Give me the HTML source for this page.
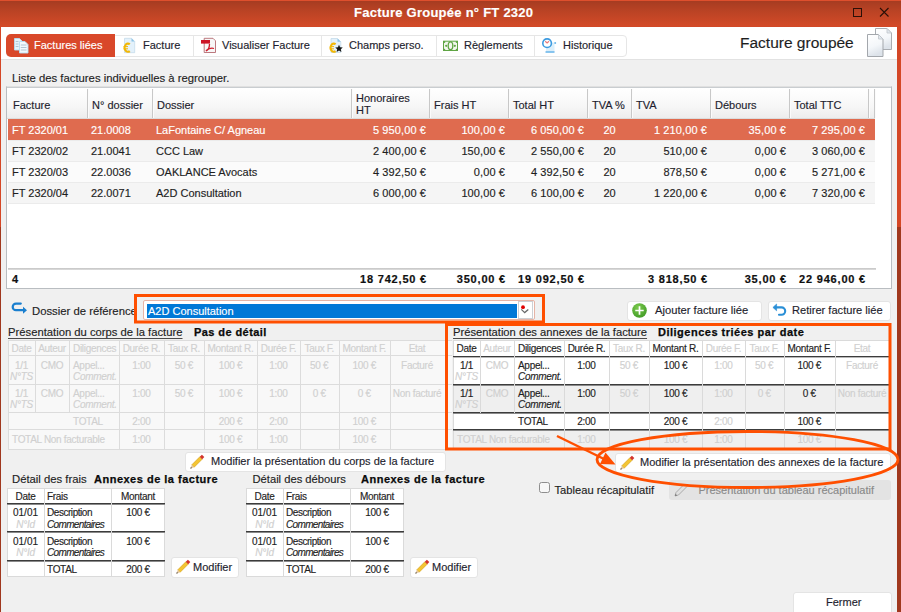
<!DOCTYPE html>
<html><head><meta charset="utf-8"><title>Facture Groupée</title>
<style>
html,body{margin:0;padding:0;}
body{width:901px;height:612px;overflow:hidden;position:relative;background:#f0f0f0;font-family:"Liberation Sans",sans-serif;}
body>div,body>svg{position:absolute;white-space:nowrap;}
body>div{-webkit-text-stroke:0.15px currentColor;}
</style></head><body>
<div style="left:0;top:0;width:901px;height:27px;background:linear-gradient(#a43b21 0px,#b84224 10px,#d34a28 26px,#d04626 27px);"></div>
<div style="left:0px;top:0px;width:901px;height:1px;background:#df4f2d;"></div>
<div style="left:0px;top:27px;width:1px;height:200px;background:#d44726;"></div>
<div style="left:0px;top:227px;width:1px;height:385px;background:#a0381e;"></div>
<div style="left:897px;top:27px;width:4px;height:200px;background:#d44726;"></div>
<div style="left:897px;top:227px;width:4px;height:385px;background:#a0381e;"></div>
<div style="left:354px;top:6px;font-size:13px;line-height:13px;color:#ffffff;font-weight:bold;letter-spacing:0.25px;">Facture Groupée n° FT 2320</div>
<svg style="left:850px;top:4px" width="48" height="18" viewBox="0 0 48 18"><rect x="3.5" y="4.5" width="8" height="8" fill="none" stroke="#2a1008" stroke-width="1"/><path d="M30 4 L38.5 12.5 M38.5 4 L30 12.5" stroke="#2a1008" stroke-width="1.1"/></svg>
<div style="left:1px;top:27px;width:896px;height:32px;background:#ffffff;"></div>
<div style="left:1px;top:59px;width:896px;height:553px;background:#f0f0f0;"></div>
<div style="left:1px;top:59px;width:896px;height:1px;background:#e2e2e2;"></div>
<div style="left:6px;top:35px;width:619px;height:20px;border:1px solid #e6e6e6;border-radius:4px;background:#fff;"></div>
<div style="left:6px;top:34px;width:109px;height:23px;background:#d9482a;border-radius:5px 0 0 5px;"></div>
<div style="left:193px;top:35px;width:1px;height:21px;background:#e6e6e6;"></div>
<div style="left:321px;top:35px;width:1px;height:21px;background:#e6e6e6;"></div>
<div style="left:436px;top:35px;width:1px;height:21px;background:#e6e6e6;"></div>
<div style="left:534px;top:35px;width:1px;height:21px;background:#e6e6e6;"></div>
<svg style="left:8px;top:32px" width="32" height="26" viewBox="8 32 32 26"><path d="M14.5 38.5 H19.5 L22 41 V50 H14.5 Z" fill="#e4f3fc" stroke="#b5dcf2" stroke-width="0.9"/><path d="M15.7 41.5 H18.5 M15.7 44 H18.5 M15.7 46.5 H18.5" stroke="#a3b8c8" stroke-width="0.8"/><path d="M19.5 41.5 H25 L28 44.5 V53 H19.5 Z" fill="#f2f9fd" stroke="#b5dcf2" stroke-width="0.9"/><path d="M20.8 45 H26.5 M20.8 47.5 H26.5 M20.8 50 H26.5" stroke="#a3b8c8" stroke-width="0.8"/></svg>
<div style="left:34px;top:40px;font-size:11px;line-height:11px;color:#ffffff;">Factures liées</div>
<svg style="left:118px;top:34px" width="24" height="22" viewBox="118 34 24 22"><path d="M124.5 38.3 H131.5 L134.7 41.5 V52.7 H124.5 Z" fill="#e3f1fb" stroke="#c5dbea" stroke-width="0.8"/><path d="M131.5 38.3 L134.7 41.5 H131.5 Z" fill="#8cc3e6"/><path d="M129.8 44.3 A3.3 4.1 0 1 0 129.8 51.1" fill="none" stroke="#f2b705" stroke-width="2.1"/><path d="M123.6 46.6 H128 M123.6 48.8 H128" stroke="#f2b705" stroke-width="1"/></svg>
<div style="left:143px;top:40px;font-size:11px;line-height:11px;color:#1e1e2e;">Facture</div>
<svg style="left:196px;top:34px" width="24" height="22" viewBox="196 34 24 22"><path d="M204.2 38.3 H213 L215.5 40.8 V52.5 H204.2 Z" fill="#f7f7f7" stroke="#b46a70" stroke-width="0.9"/><path d="M201 40 H210 V43.6 H201 Z" fill="#cc1426"/><path d="M209.5 44 C209.5 47 208 50 206 51 C207.5 49 211 47.5 214 48.5" fill="none" stroke="#d01c2c" stroke-width="1.3"/></svg>
<div style="left:222px;top:40px;font-size:11px;line-height:11px;color:#1e1e2e;">Visualiser Facture</div>
<svg style="left:325px;top:34px" width="24" height="22" viewBox="325 34 24 22"><path d="M331 38.5 H337.5 L340.8 41.8 V52.5 H331 Z" fill="#e3f1fb" stroke="#c5dbea" stroke-width="0.8"/><path d="M337.5 38.5 L340.8 41.8 H337.5 Z" fill="#8cc3e6"/><path d="M335.6 44.3 A3.2 4.1 0 1 0 335.6 51.1" fill="none" stroke="#f2b705" stroke-width="2.1"/><path d="M330 46.6 H334 M330 48.8 H334" stroke="#f2b705" stroke-width="1"/><path d="M339 44.8 L340.1 47.3 L342.8 47.5 L340.8 49.2 L341.4 51.9 L339 50.5 L336.6 51.9 L337.2 49.2 L335.2 47.5 L337.9 47.3 Z" fill="#151515"/></svg>
<div style="left:349px;top:40px;font-size:11px;line-height:11px;color:#1e1e2e;">Champs perso.</div>
<svg style="left:438px;top:34px" width="24" height="22" viewBox="438 34 24 22"><rect x="443.5" y="41.2" width="14" height="9.3" fill="#f2f6ee" stroke="#5fa544" stroke-width="1"/><ellipse cx="450.5" cy="45.85" rx="2.3" ry="3.9" fill="none" stroke="#5fa544" stroke-width="1.3"/><circle cx="446.2" cy="45.85" r="1.1" fill="#5fa544"/><circle cx="454.8" cy="45.85" r="1.1" fill="#5fa544"/><circle cx="444.3" cy="42" r="1" fill="#5fa544"/><circle cx="456.7" cy="42" r="1" fill="#5fa544"/><circle cx="444.3" cy="49.7" r="1" fill="#5fa544"/><circle cx="456.7" cy="49.7" r="1" fill="#5fa544"/></svg>
<div style="left:464px;top:40px;font-size:11px;line-height:11px;color:#1e1e2e;">Règlements</div>
<svg style="left:537px;top:34px" width="24" height="22" viewBox="537 34 24 22"><path d="M546 42.5 H554.5 V52.5 H546 Z" fill="#dcefFa"/><path d="M545.5 52 H554.5" stroke="#5fb0e8" stroke-width="1.4"/><circle cx="555.2" cy="42.9" r="1" fill="#6ab6ea"/><circle cx="547.1" cy="43.2" r="4.3" fill="#ffffff" stroke="#3c9be0" stroke-width="1.6"/><path d="M545.2 41.3 L547.1 43 L549 41.3" fill="none" stroke="#e87b7b" stroke-width="1.2"/></svg>
<div style="left:563px;top:40px;font-size:11px;line-height:11px;color:#1e1e2e;">Historique</div>
<div style="left:740px;top:35px;font-size:15.5px;line-height:15.5px;color:#1e1e1e;">Facture groupée</div>
<svg style="left:866px;top:27px" width="28" height="31" viewBox="0 0 28 31"><defs><linearGradient id="dg" x1="0" y1="0" x2="0.3" y2="1"><stop offset="0" stop-color="#ffffff"/><stop offset="0.6" stop-color="#f4f7fa"/><stop offset="1" stop-color="#dde3ea"/></linearGradient></defs><path d="M9.5 1.5 H21 L25.5 6 V22.5 H9.5 Z" fill="url(#dg)" stroke="#a9adb2" stroke-width="1"/><path d="M21 1.5 V6 H25.5 Z" fill="#e2e8ee" stroke="#c0c5ca" stroke-width="0.8"/><path d="M1.5 7.5 H12.5 L17 12 V29.5 H1.5 Z" fill="url(#dg)" stroke="#a3a7ac" stroke-width="1"/><path d="M12.5 7.5 V12 H17 Z" fill="#e2e8ee" stroke="#c0c5ca" stroke-width="0.8"/></svg>
<div style="left:12px;top:72.5px;font-size:11.3px;line-height:11.3px;color:#1e1e1e;">Liste des factures individuelles à regrouper.</div>
<div style="left:6px;top:86px;width:886px;height:203px;background:#ffffff;border:1px solid #b9bdc1;border-top-color:#e0e0e0;box-sizing:border-box;"></div>
<div style="left:7px;top:87px;width:884px;height:1px;background:#c9cdd0;"></div>
<div style="left:7px;top:88px;width:868px;height:30px;background:linear-gradient(#ffffff,#f7f7f7 60%,#ededed);"></div>
<div style="left:7px;top:118px;width:868px;height:1px;background:#dcdcdc;"></div>
<div style="left:87px;top:89px;width:1px;height:29px;background:#c8c8c8;"></div>
<div style="left:88px;top:89px;width:1px;height:29px;background:#fbfbfb;"></div>
<div style="left:152px;top:89px;width:1px;height:29px;background:#c8c8c8;"></div>
<div style="left:153px;top:89px;width:1px;height:29px;background:#fbfbfb;"></div>
<div style="left:351px;top:89px;width:1px;height:29px;background:#c8c8c8;"></div>
<div style="left:352px;top:89px;width:1px;height:29px;background:#fbfbfb;"></div>
<div style="left:429px;top:89px;width:1px;height:29px;background:#c8c8c8;"></div>
<div style="left:430px;top:89px;width:1px;height:29px;background:#fbfbfb;"></div>
<div style="left:508px;top:89px;width:1px;height:29px;background:#c8c8c8;"></div>
<div style="left:509px;top:89px;width:1px;height:29px;background:#fbfbfb;"></div>
<div style="left:587px;top:89px;width:1px;height:29px;background:#c8c8c8;"></div>
<div style="left:588px;top:89px;width:1px;height:29px;background:#fbfbfb;"></div>
<div style="left:631px;top:89px;width:1px;height:29px;background:#c8c8c8;"></div>
<div style="left:632px;top:89px;width:1px;height:29px;background:#fbfbfb;"></div>
<div style="left:710px;top:89px;width:1px;height:29px;background:#c8c8c8;"></div>
<div style="left:711px;top:89px;width:1px;height:29px;background:#fbfbfb;"></div>
<div style="left:789px;top:89px;width:1px;height:29px;background:#c8c8c8;"></div>
<div style="left:790px;top:89px;width:1px;height:29px;background:#fbfbfb;"></div>
<div style="left:868px;top:89px;width:1px;height:29px;background:#c8c8c8;"></div>
<div style="left:869px;top:89px;width:1px;height:29px;background:#fbfbfb;"></div>
<div style="left:874px;top:89px;width:1px;height:29px;background:#c8c8c8;"></div>
<div style="left:875px;top:89px;width:1px;height:29px;background:#fbfbfb;"></div>
<div style="left:13px;top:99.5px;font-size:11px;line-height:11px;color:#1e1e2e;">Facture</div>
<div style="left:92px;top:99.5px;font-size:11px;line-height:11px;color:#1e1e2e;">N° dossier</div>
<div style="left:157px;top:99.5px;font-size:11px;line-height:11px;color:#1e1e2e;">Dossier</div>
<div style="left:434px;top:99.5px;font-size:11px;line-height:11px;color:#1e1e2e;">Frais HT</div>
<div style="left:513px;top:99.5px;font-size:11px;line-height:11px;color:#1e1e2e;">Total HT</div>
<div style="left:592px;top:99.5px;font-size:11px;line-height:11px;color:#1e1e2e;">TVA %</div>
<div style="left:636px;top:99.5px;font-size:11px;line-height:11px;color:#1e1e2e;">TVA</div>
<div style="left:715px;top:99.5px;font-size:11px;line-height:11px;color:#1e1e2e;">Débours</div>
<div style="left:794px;top:99.5px;font-size:11px;line-height:11px;color:#1e1e2e;">Total TTC</div>
<div style="left:356px;top:93px;font-size:11px;line-height:11px;color:#1e1e2e;">Honoraires</div>
<div style="left:356px;top:105px;font-size:11px;line-height:11px;color:#1e1e2e;">HT</div>
<div style="left:8px;top:119px;width:867px;height:21px;background:#df6b4f;"></div>
<div style="left:12px;top:124.5px;font-size:11px;line-height:11px;color:#ffffff;">FT 2320/01</div>
<div style="left:91px;top:124.5px;font-size:11px;line-height:11px;color:#ffffff;">21.0008</div>
<div style="left:156px;top:124.5px;font-size:11px;line-height:11px;color:#ffffff;">LaFontaine C/ Agneau</div>
<div style="left:351px;top:124.5px;font-size:11px;line-height:11px;color:#ffffff;width:75px;text-align:right;letter-spacing:0.1px;">5 950,00 €</div>
<div style="left:429px;top:124.5px;font-size:11px;line-height:11px;color:#ffffff;width:76px;text-align:right;letter-spacing:0.1px;">100,00 €</div>
<div style="left:508px;top:124.5px;font-size:11px;line-height:11px;color:#ffffff;width:76px;text-align:right;letter-spacing:0.1px;">6 050,00 €</div>
<div style="left:587px;top:124.5px;font-size:11px;line-height:11px;color:#ffffff;width:45px;text-align:center;">20</div>
<div style="left:631px;top:124.5px;font-size:11px;line-height:11px;color:#ffffff;width:76px;text-align:right;letter-spacing:0.1px;">1 210,00 €</div>
<div style="left:710px;top:124.5px;font-size:11px;line-height:11px;color:#ffffff;width:76px;text-align:right;letter-spacing:0.1px;">35,00 €</div>
<div style="left:789px;top:124.5px;font-size:11px;line-height:11px;color:#ffffff;width:76px;text-align:right;letter-spacing:0.1px;">7 295,00 €</div>
<div style="left:8px;top:140px;width:867px;height:21px;background:#f5f5f5;"></div>
<div style="left:8px;top:140px;width:867px;height:1px;background:#ebebeb;"></div>
<div style="left:12px;top:145.5px;font-size:11px;line-height:11px;color:#1e1e1e;">FT 2320/02</div>
<div style="left:91px;top:145.5px;font-size:11px;line-height:11px;color:#1e1e1e;">21.0041</div>
<div style="left:156px;top:145.5px;font-size:11px;line-height:11px;color:#1e1e1e;">CCC Law</div>
<div style="left:351px;top:145.5px;font-size:11px;line-height:11px;color:#1e1e1e;width:75px;text-align:right;letter-spacing:0.1px;">2 400,00 €</div>
<div style="left:429px;top:145.5px;font-size:11px;line-height:11px;color:#1e1e1e;width:76px;text-align:right;letter-spacing:0.1px;">150,00 €</div>
<div style="left:508px;top:145.5px;font-size:11px;line-height:11px;color:#1e1e1e;width:76px;text-align:right;letter-spacing:0.1px;">2 550,00 €</div>
<div style="left:587px;top:145.5px;font-size:11px;line-height:11px;color:#1e1e1e;width:45px;text-align:center;">20</div>
<div style="left:631px;top:145.5px;font-size:11px;line-height:11px;color:#1e1e1e;width:76px;text-align:right;letter-spacing:0.1px;">510,00 €</div>
<div style="left:710px;top:145.5px;font-size:11px;line-height:11px;color:#1e1e1e;width:76px;text-align:right;letter-spacing:0.1px;">0,00 €</div>
<div style="left:789px;top:145.5px;font-size:11px;line-height:11px;color:#1e1e1e;width:76px;text-align:right;letter-spacing:0.1px;">3 060,00 €</div>
<div style="left:8px;top:161px;width:867px;height:21px;background:#fbfbfb;"></div>
<div style="left:8px;top:161px;width:867px;height:1px;background:#ebebeb;"></div>
<div style="left:12px;top:166.5px;font-size:11px;line-height:11px;color:#1e1e1e;">FT 2320/03</div>
<div style="left:91px;top:166.5px;font-size:11px;line-height:11px;color:#1e1e1e;">22.0036</div>
<div style="left:156px;top:166.5px;font-size:11px;line-height:11px;color:#1e1e1e;">OAKLANCE Avocats</div>
<div style="left:351px;top:166.5px;font-size:11px;line-height:11px;color:#1e1e1e;width:75px;text-align:right;letter-spacing:0.1px;">4 392,50 €</div>
<div style="left:429px;top:166.5px;font-size:11px;line-height:11px;color:#1e1e1e;width:76px;text-align:right;letter-spacing:0.1px;">0,00 €</div>
<div style="left:508px;top:166.5px;font-size:11px;line-height:11px;color:#1e1e1e;width:76px;text-align:right;letter-spacing:0.1px;">4 392,50 €</div>
<div style="left:587px;top:166.5px;font-size:11px;line-height:11px;color:#1e1e1e;width:45px;text-align:center;">20</div>
<div style="left:631px;top:166.5px;font-size:11px;line-height:11px;color:#1e1e1e;width:76px;text-align:right;letter-spacing:0.1px;">878,50 €</div>
<div style="left:710px;top:166.5px;font-size:11px;line-height:11px;color:#1e1e1e;width:76px;text-align:right;letter-spacing:0.1px;">0,00 €</div>
<div style="left:789px;top:166.5px;font-size:11px;line-height:11px;color:#1e1e1e;width:76px;text-align:right;letter-spacing:0.1px;">5 271,00 €</div>
<div style="left:8px;top:182px;width:867px;height:21px;background:#f5f5f5;"></div>
<div style="left:8px;top:182px;width:867px;height:1px;background:#ebebeb;"></div>
<div style="left:12px;top:187.5px;font-size:11px;line-height:11px;color:#1e1e1e;">FT 2320/04</div>
<div style="left:91px;top:187.5px;font-size:11px;line-height:11px;color:#1e1e1e;">22.0071</div>
<div style="left:156px;top:187.5px;font-size:11px;line-height:11px;color:#1e1e1e;">A2D Consultation</div>
<div style="left:351px;top:187.5px;font-size:11px;line-height:11px;color:#1e1e1e;width:75px;text-align:right;letter-spacing:0.1px;">6 000,00 €</div>
<div style="left:429px;top:187.5px;font-size:11px;line-height:11px;color:#1e1e1e;width:76px;text-align:right;letter-spacing:0.1px;">100,00 €</div>
<div style="left:508px;top:187.5px;font-size:11px;line-height:11px;color:#1e1e1e;width:76px;text-align:right;letter-spacing:0.1px;">6 100,00 €</div>
<div style="left:587px;top:187.5px;font-size:11px;line-height:11px;color:#1e1e1e;width:45px;text-align:center;">20</div>
<div style="left:631px;top:187.5px;font-size:11px;line-height:11px;color:#1e1e1e;width:76px;text-align:right;letter-spacing:0.1px;">1 220,00 €</div>
<div style="left:710px;top:187.5px;font-size:11px;line-height:11px;color:#1e1e1e;width:76px;text-align:right;letter-spacing:0.1px;">0,00 €</div>
<div style="left:789px;top:187.5px;font-size:11px;line-height:11px;color:#1e1e1e;width:76px;text-align:right;letter-spacing:0.1px;">7 320,00 €</div>
<div style="left:8px;top:203px;width:867px;height:1px;background:#ebebeb;"></div>
<div style="left:8px;top:268px;width:868px;height:2px;background:linear-gradient(#c4c4c4,#dedede);"></div>
<div style="left:12px;top:274px;font-size:11px;line-height:11px;color:#101010;font-weight:bold;-webkit-text-stroke:0.2px #101010;">4</div>
<div style="left:351px;top:274px;font-size:11px;line-height:11px;color:#101010;font-weight:bold;width:76px;text-align:right;letter-spacing:0.8px;-webkit-text-stroke:0.2px #101010;">18 742,50 €</div>
<div style="left:429px;top:274px;font-size:11px;line-height:11px;color:#101010;font-weight:bold;width:77px;text-align:right;letter-spacing:0.8px;-webkit-text-stroke:0.2px #101010;">350,00 €</div>
<div style="left:508px;top:274px;font-size:11px;line-height:11px;color:#101010;font-weight:bold;width:77px;text-align:right;letter-spacing:0.8px;-webkit-text-stroke:0.2px #101010;">19 092,50 €</div>
<div style="left:631px;top:274px;font-size:11px;line-height:11px;color:#101010;font-weight:bold;width:77px;text-align:right;letter-spacing:0.8px;-webkit-text-stroke:0.2px #101010;">3 818,50 €</div>
<div style="left:710px;top:274px;font-size:11px;line-height:11px;color:#101010;font-weight:bold;width:77px;text-align:right;letter-spacing:0.8px;-webkit-text-stroke:0.2px #101010;">35,00 €</div>
<div style="left:789px;top:274px;font-size:11px;line-height:11px;color:#101010;font-weight:bold;width:77px;text-align:right;letter-spacing:0.8px;-webkit-text-stroke:0.2px #101010;">22 946,00 €</div>
<svg style="left:8px;top:298px" width="24" height="22" viewBox="0 0 24 22"><path d="M12.8 5.6 H8 A3.3 3.3 0 0 0 8 12.2 H16" fill="none" stroke="#1a7fcf" stroke-width="2.2" stroke-linecap="round"/><path d="M15 8.8 L19 12.3 L15 15.8 Z" fill="#1a7fcf"/></svg>
<div style="left:32px;top:306px;font-size:11.3px;line-height:11.3px;color:#1e1e1e;">Dossier de référence</div>
<div style="left:143px;top:300px;width:392px;height:20px;background:#ffffff;border:1.5px solid #e6b4a6;border-radius:2px;box-sizing:border-box;"></div>
<div style="left:147px;top:304px;width:370px;height:14px;background:#0078d7;"></div>
<div style="left:148px;top:306px;font-size:11px;line-height:11px;color:#ffffff;">A2D Consultation</div>
<div style="left:518px;top:301px;width:15px;height:18px;background:#ffffff;border:1px solid #cdd0d4;box-sizing:border-box;"></div>
<svg style="left:512px;top:298px" width="28" height="24" viewBox="512 298 28 24"><circle cx="523" cy="307.2" r="1.9" fill="#e00000"/><path d="M521.3 309.4 L524.7 312.6 L528.3 309.4" fill="none" stroke="#6a6a6a" stroke-width="1.3"/></svg>
<div style="left:627px;top:301px;width:135px;height:20px;background:#fff;border:1px solid #e4e4e4;border-radius:3px;box-sizing:border-box;"></div>
<svg style="left:631px;top:302px" width="17" height="17" viewBox="0 0 17 17"><defs><radialGradient id="gg" cx="0.4" cy="0.3" r="0.8"><stop offset="0" stop-color="#7ccb4e"/><stop offset="1" stop-color="#3c9722"/></radialGradient></defs><circle cx="8.5" cy="8.5" r="7.3" fill="url(#gg)"/><path d="M8.5 4.3 V12.7 M4.3 8.5 H12.7" stroke="#ffffff" stroke-width="1.7"/></svg>
<div style="left:655px;top:305px;font-size:11.2px;line-height:11.2px;color:#1e1e2e;">Ajouter facture liée</div>
<div style="left:768px;top:301px;width:123px;height:20px;background:#fff;border:1px solid #e4e4e4;border-radius:3px;box-sizing:border-box;"></div>
<svg style="left:768px;top:300px" width="24" height="22" viewBox="768 300 24 22"><path d="M775.5 307.4 H781.5 A3.7 3.7 0 0 1 781.5 314.8 H779" fill="none" stroke="#2a8fd6" stroke-width="2.1" stroke-linecap="round"/><path d="M772.9 307.4 L776.6 304 L776.6 310.8 Z" fill="#2a8fd6" stroke="#2a8fd6" stroke-width="0.6" stroke-linejoin="round"/></svg>
<div style="left:792px;top:305px;font-size:11.1px;line-height:11.1px;color:#1e1e2e;">Retirer facture liée</div>
<div style="left:8px;top:340px;width:444px;height:109px;background:#f8f8f8;"></div>
<div style="left:8px;top:340px;width:444px;height:1px;background:#dcdcdc;"></div>
<div style="left:8px;top:340px;width:1px;height:109px;background:#dcdcdc;"></div>
<div style="left:8px;top:355px;width:444px;height:1px;background:#dcdcdc;"></div>
<div style="left:8px;top:384px;width:444px;height:1px;background:#dcdcdc;"></div>
<div style="left:8px;top:412px;width:444px;height:1px;background:#dcdcdc;"></div>
<div style="left:8px;top:429px;width:444px;height:1px;background:#dcdcdc;"></div>
<div style="left:8px;top:449px;width:444px;height:1px;background:#dcdcdc;"></div>
<div style="left:35px;top:340px;width:1px;height:73px;background:#dcdcdc;"></div>
<div style="left:69px;top:340px;width:1px;height:73px;background:#dcdcdc;"></div>
<div style="left:119px;top:340px;width:1px;height:73px;background:#dcdcdc;"></div>
<div style="left:119px;top:413px;width:1px;height:17px;background:#dcdcdc;"></div>
<div style="left:119px;top:430px;width:1px;height:19px;background:#dcdcdc;"></div>
<div style="left:164px;top:340px;width:1px;height:73px;background:#dcdcdc;"></div>
<div style="left:164px;top:413px;width:1px;height:17px;background:#dcdcdc;"></div>
<div style="left:164px;top:430px;width:1px;height:19px;background:#dcdcdc;"></div>
<div style="left:204px;top:340px;width:1px;height:73px;background:#dcdcdc;"></div>
<div style="left:204px;top:413px;width:1px;height:17px;background:#dcdcdc;"></div>
<div style="left:204px;top:430px;width:1px;height:19px;background:#dcdcdc;"></div>
<div style="left:257px;top:340px;width:1px;height:73px;background:#dcdcdc;"></div>
<div style="left:257px;top:413px;width:1px;height:17px;background:#dcdcdc;"></div>
<div style="left:257px;top:430px;width:1px;height:19px;background:#dcdcdc;"></div>
<div style="left:300px;top:340px;width:1px;height:73px;background:#dcdcdc;"></div>
<div style="left:300px;top:413px;width:1px;height:17px;background:#dcdcdc;"></div>
<div style="left:300px;top:430px;width:1px;height:19px;background:#dcdcdc;"></div>
<div style="left:338.5px;top:340px;width:1px;height:73px;background:#dcdcdc;"></div>
<div style="left:338.5px;top:413px;width:1px;height:17px;background:#dcdcdc;"></div>
<div style="left:338.5px;top:430px;width:1px;height:19px;background:#dcdcdc;"></div>
<div style="left:390px;top:340px;width:1px;height:73px;background:#dcdcdc;"></div>
<div style="left:390px;top:413px;width:1px;height:17px;background:#dcdcdc;"></div>
<div style="left:390px;top:430px;width:1px;height:19px;background:#dcdcdc;"></div>
<div style="left:8px;top:344px;font-size:10px;line-height:10px;color:#d0d0d0;width:27px;text-align:center;letter-spacing:-0.3px;">Date</div>
<div style="left:35px;top:344px;font-size:10px;line-height:10px;color:#d0d0d0;width:34px;text-align:center;letter-spacing:-0.3px;">Auteur</div>
<div style="left:73px;top:344px;font-size:10px;line-height:10px;color:#d0d0d0;letter-spacing:-0.3px;">Diligences</div>
<div style="left:119px;top:344px;font-size:10px;line-height:10px;color:#d0d0d0;width:45px;text-align:center;letter-spacing:-0.3px;">Durée R.</div>
<div style="left:164px;top:344px;font-size:10px;line-height:10px;color:#d0d0d0;width:40px;text-align:center;letter-spacing:-0.3px;">Taux R.</div>
<div style="left:204px;top:344px;font-size:10px;line-height:10px;color:#d0d0d0;width:53px;text-align:center;letter-spacing:-0.3px;">Montant R.</div>
<div style="left:257px;top:344px;font-size:10px;line-height:10px;color:#d0d0d0;width:43px;text-align:center;letter-spacing:-0.3px;">Durée F.</div>
<div style="left:300px;top:344px;font-size:10px;line-height:10px;color:#d0d0d0;width:38.5px;text-align:center;letter-spacing:-0.3px;">Taux F.</div>
<div style="left:338.5px;top:344px;font-size:10px;line-height:10px;color:#d0d0d0;width:51.5px;text-align:center;letter-spacing:-0.3px;">Montant F.</div>
<div style="left:390px;top:344px;font-size:10px;line-height:10px;color:#d0d0d0;width:54px;text-align:center;letter-spacing:-0.3px;">Etat</div>
<div style="left:8px;top:361px;font-size:10px;line-height:10px;color:#d0d0d0;width:27px;text-align:center;letter-spacing:-0.3px;">1/1</div>
<div style="left:8px;top:372px;font-size:10px;line-height:10px;color:#d0d0d0;font-style:italic;width:27px;text-align:center;letter-spacing:-0.3px;">N°TS</div>
<div style="left:35px;top:361px;font-size:10px;line-height:10px;color:#d0d0d0;width:34px;text-align:center;letter-spacing:-0.3px;">CMO</div>
<div style="left:73px;top:361px;font-size:10px;line-height:10px;color:#d0d0d0;letter-spacing:-0.3px;">Appel...</div>
<div style="left:73px;top:372px;font-size:10px;line-height:10px;color:#d0d0d0;font-style:italic;letter-spacing:-0.3px;">Comment.</div>
<div style="left:119px;top:361px;font-size:10px;line-height:10px;color:#d0d0d0;width:45px;text-align:center;letter-spacing:-0.3px;">1:00</div>
<div style="left:164px;top:361px;font-size:10px;line-height:10px;color:#d0d0d0;width:40px;text-align:center;letter-spacing:-0.3px;">50 €</div>
<div style="left:204px;top:361px;font-size:10px;line-height:10px;color:#d0d0d0;width:53px;text-align:center;letter-spacing:-0.3px;">100 €</div>
<div style="left:257px;top:361px;font-size:10px;line-height:10px;color:#d0d0d0;width:43px;text-align:center;letter-spacing:-0.3px;">1:00</div>
<div style="left:300px;top:361px;font-size:10px;line-height:10px;color:#d0d0d0;width:38.5px;text-align:center;letter-spacing:-0.3px;">50 €</div>
<div style="left:338.5px;top:361px;font-size:10px;line-height:10px;color:#d0d0d0;width:51.5px;text-align:center;letter-spacing:-0.3px;">100 €</div>
<div style="left:390px;top:361px;font-size:10px;line-height:10px;color:#d0d0d0;width:54px;text-align:center;letter-spacing:-0.3px;">Facturé</div>
<div style="left:8px;top:389px;font-size:10px;line-height:10px;color:#d0d0d0;width:27px;text-align:center;letter-spacing:-0.3px;">1/1</div>
<div style="left:8px;top:400px;font-size:10px;line-height:10px;color:#d0d0d0;font-style:italic;width:27px;text-align:center;letter-spacing:-0.3px;">N°TS</div>
<div style="left:35px;top:389px;font-size:10px;line-height:10px;color:#d0d0d0;width:34px;text-align:center;letter-spacing:-0.3px;">CMO</div>
<div style="left:73px;top:389px;font-size:10px;line-height:10px;color:#d0d0d0;letter-spacing:-0.3px;">Appel...</div>
<div style="left:73px;top:400px;font-size:10px;line-height:10px;color:#d0d0d0;font-style:italic;letter-spacing:-0.3px;">Comment.</div>
<div style="left:119px;top:389px;font-size:10px;line-height:10px;color:#d0d0d0;width:45px;text-align:center;letter-spacing:-0.3px;">1:00</div>
<div style="left:164px;top:389px;font-size:10px;line-height:10px;color:#d0d0d0;width:40px;text-align:center;letter-spacing:-0.3px;">50 €</div>
<div style="left:204px;top:389px;font-size:10px;line-height:10px;color:#d0d0d0;width:53px;text-align:center;letter-spacing:-0.3px;">100 €</div>
<div style="left:257px;top:389px;font-size:10px;line-height:10px;color:#d0d0d0;width:43px;text-align:center;letter-spacing:-0.3px;">1:00</div>
<div style="left:300px;top:389px;font-size:10px;line-height:10px;color:#d0d0d0;width:38.5px;text-align:center;letter-spacing:-0.3px;">0 €</div>
<div style="left:338.5px;top:389px;font-size:10px;line-height:10px;color:#d0d0d0;width:51.5px;text-align:center;letter-spacing:-0.3px;">0 €</div>
<div style="left:390px;top:389px;font-size:10px;line-height:10px;color:#d0d0d0;width:54px;text-align:center;letter-spacing:-0.3px;">Non facturé</div>
<div style="left:73px;top:417px;font-size:10px;line-height:10px;color:#d0d0d0;letter-spacing:-0.3px;">TOTAL</div>
<div style="left:119px;top:417px;font-size:10px;line-height:10px;color:#d0d0d0;width:45px;text-align:center;letter-spacing:-0.3px;">2:00</div>
<div style="left:204px;top:417px;font-size:10px;line-height:10px;color:#d0d0d0;width:53px;text-align:center;letter-spacing:-0.3px;">200 €</div>
<div style="left:257px;top:417px;font-size:10px;line-height:10px;color:#d0d0d0;width:43px;text-align:center;letter-spacing:-0.3px;">2:00</div>
<div style="left:338.5px;top:417px;font-size:10px;line-height:10px;color:#d0d0d0;width:51.5px;text-align:center;letter-spacing:-0.3px;">100 €</div>
<div style="left:12px;top:435px;font-size:10px;line-height:10px;color:#d0d0d0;letter-spacing:-0.3px;">TOTAL Non facturable</div>
<div style="left:119px;top:435px;font-size:10px;line-height:10px;color:#d0d0d0;width:45px;text-align:center;letter-spacing:-0.3px;">1:00</div>
<div style="left:204px;top:435px;font-size:10px;line-height:10px;color:#d0d0d0;width:53px;text-align:center;letter-spacing:-0.3px;">100 €</div>
<div style="left:257px;top:435px;font-size:10px;line-height:10px;color:#d0d0d0;width:43px;text-align:center;letter-spacing:-0.3px;">1:00</div>
<div style="left:338.5px;top:435px;font-size:10px;line-height:10px;color:#d0d0d0;width:51.5px;text-align:center;letter-spacing:-0.3px;">100 €</div>
<div style="left:453px;top:340px;width:436px;height:108px;background:#ffffff;"></div>
<div style="left:453px;top:386px;width:436px;height:27px;background:#efefef;"></div>
<div style="left:453px;top:431px;width:436px;height:17px;background:#efefef;"></div>
<div style="left:453px;top:340px;width:436px;height:1px;background:#dadada;"></div>
<div style="left:453px;top:340px;width:1px;height:108px;background:#dadada;"></div>
<div style="left:453px;top:356px;width:436px;height:1px;background:#3c3c3c;"></div>
<div style="left:453px;top:357px;width:436px;height:1px;background:#b8b8b8;"></div>
<div style="left:453px;top:384px;width:436px;height:1px;background:#3c3c3c;"></div>
<div style="left:453px;top:385px;width:436px;height:1px;background:#8a8a8a;"></div>
<div style="left:453px;top:412px;width:436px;height:1px;background:#3c3c3c;"></div>
<div style="left:453px;top:413px;width:436px;height:1px;background:#8a8a8a;"></div>
<div style="left:453px;top:429px;width:436px;height:1px;background:#3c3c3c;"></div>
<div style="left:453px;top:430px;width:436px;height:1px;background:#8a8a8a;"></div>
<div style="left:480px;top:340px;width:1px;height:73px;background:#dadada;"></div>
<div style="left:514px;top:340px;width:1px;height:73px;background:#dadada;"></div>
<div style="left:564px;top:340px;width:1px;height:73px;background:#dadada;"></div>
<div style="left:564px;top:413px;width:1px;height:17px;background:#dadada;"></div>
<div style="left:564px;top:430px;width:1px;height:18px;background:#dadada;"></div>
<div style="left:609px;top:340px;width:1px;height:73px;background:#dadada;"></div>
<div style="left:609px;top:413px;width:1px;height:17px;background:#dadada;"></div>
<div style="left:609px;top:430px;width:1px;height:18px;background:#dadada;"></div>
<div style="left:649px;top:340px;width:1px;height:73px;background:#dadada;"></div>
<div style="left:649px;top:413px;width:1px;height:17px;background:#dadada;"></div>
<div style="left:649px;top:430px;width:1px;height:18px;background:#dadada;"></div>
<div style="left:702px;top:340px;width:1px;height:73px;background:#dadada;"></div>
<div style="left:702px;top:413px;width:1px;height:17px;background:#dadada;"></div>
<div style="left:702px;top:430px;width:1px;height:18px;background:#dadada;"></div>
<div style="left:745px;top:340px;width:1px;height:73px;background:#dadada;"></div>
<div style="left:745px;top:413px;width:1px;height:17px;background:#dadada;"></div>
<div style="left:745px;top:430px;width:1px;height:18px;background:#dadada;"></div>
<div style="left:783.5px;top:340px;width:1px;height:73px;background:#dadada;"></div>
<div style="left:783.5px;top:413px;width:1px;height:17px;background:#dadada;"></div>
<div style="left:783.5px;top:430px;width:1px;height:18px;background:#dadada;"></div>
<div style="left:835px;top:340px;width:1px;height:73px;background:#dadada;"></div>
<div style="left:835px;top:413px;width:1px;height:17px;background:#dadada;"></div>
<div style="left:835px;top:430px;width:1px;height:18px;background:#dadada;"></div>
<div style="left:453px;top:344px;font-size:10px;line-height:10px;color:#1e1e1e;width:27px;text-align:center;letter-spacing:-0.3px;">Date</div>
<div style="left:480px;top:344px;font-size:10px;line-height:10px;color:#d0d0d0;width:34px;text-align:center;letter-spacing:-0.3px;">Auteur</div>
<div style="left:518px;top:344px;font-size:10px;line-height:10px;color:#1e1e1e;letter-spacing:-0.3px;">Diligences</div>
<div style="left:564px;top:344px;font-size:10px;line-height:10px;color:#1e1e1e;width:45px;text-align:center;letter-spacing:-0.3px;">Durée R.</div>
<div style="left:609px;top:344px;font-size:10px;line-height:10px;color:#d0d0d0;width:40px;text-align:center;letter-spacing:-0.3px;">Taux R.</div>
<div style="left:649px;top:344px;font-size:10px;line-height:10px;color:#1e1e1e;width:53px;text-align:center;letter-spacing:-0.3px;">Montant R.</div>
<div style="left:702px;top:344px;font-size:10px;line-height:10px;color:#d0d0d0;width:43px;text-align:center;letter-spacing:-0.3px;">Durée F.</div>
<div style="left:745px;top:344px;font-size:10px;line-height:10px;color:#d0d0d0;width:38.5px;text-align:center;letter-spacing:-0.3px;">Taux F.</div>
<div style="left:783.5px;top:344px;font-size:10px;line-height:10px;color:#1e1e1e;width:51.5px;text-align:center;letter-spacing:-0.3px;">Montant F.</div>
<div style="left:835px;top:344px;font-size:10px;line-height:10px;color:#d0d0d0;width:54px;text-align:center;letter-spacing:-0.3px;">Etat</div>
<div style="left:453px;top:361px;font-size:10px;line-height:10px;color:#1e1e1e;width:27px;text-align:center;letter-spacing:-0.3px;">1/1</div>
<div style="left:453px;top:372px;font-size:10px;line-height:10px;color:#d0d0d0;font-style:italic;width:27px;text-align:center;letter-spacing:-0.3px;">N°TS</div>
<div style="left:480px;top:361px;font-size:10px;line-height:10px;color:#d0d0d0;width:34px;text-align:center;letter-spacing:-0.3px;">CMO</div>
<div style="left:518px;top:361px;font-size:10px;line-height:10px;color:#1e1e1e;letter-spacing:-0.3px;">Appel...</div>
<div style="left:518px;top:372px;font-size:10px;line-height:10px;color:#1e1e1e;font-style:italic;letter-spacing:-0.3px;">Comment.</div>
<div style="left:564px;top:361px;font-size:10px;line-height:10px;color:#1e1e1e;width:45px;text-align:center;letter-spacing:-0.3px;">1:00</div>
<div style="left:609px;top:361px;font-size:10px;line-height:10px;color:#d0d0d0;width:40px;text-align:center;letter-spacing:-0.3px;">50 €</div>
<div style="left:649px;top:361px;font-size:10px;line-height:10px;color:#1e1e1e;width:53px;text-align:center;letter-spacing:-0.3px;">100 €</div>
<div style="left:702px;top:361px;font-size:10px;line-height:10px;color:#d0d0d0;width:43px;text-align:center;letter-spacing:-0.3px;">1:00</div>
<div style="left:745px;top:361px;font-size:10px;line-height:10px;color:#d0d0d0;width:38.5px;text-align:center;letter-spacing:-0.3px;">50 €</div>
<div style="left:783.5px;top:361px;font-size:10px;line-height:10px;color:#1e1e1e;width:51.5px;text-align:center;letter-spacing:-0.3px;">100 €</div>
<div style="left:835px;top:361px;font-size:10px;line-height:10px;color:#d0d0d0;width:54px;text-align:center;letter-spacing:-0.3px;">Facturé</div>
<div style="left:453px;top:389px;font-size:10px;line-height:10px;color:#1e1e1e;width:27px;text-align:center;letter-spacing:-0.3px;">1/1</div>
<div style="left:453px;top:400px;font-size:10px;line-height:10px;color:#d0d0d0;font-style:italic;width:27px;text-align:center;letter-spacing:-0.3px;">N°TS</div>
<div style="left:480px;top:389px;font-size:10px;line-height:10px;color:#d0d0d0;width:34px;text-align:center;letter-spacing:-0.3px;">CMO</div>
<div style="left:518px;top:389px;font-size:10px;line-height:10px;color:#1e1e1e;letter-spacing:-0.3px;">Appel...</div>
<div style="left:518px;top:400px;font-size:10px;line-height:10px;color:#1e1e1e;font-style:italic;letter-spacing:-0.3px;">Comment.</div>
<div style="left:564px;top:389px;font-size:10px;line-height:10px;color:#1e1e1e;width:45px;text-align:center;letter-spacing:-0.3px;">1:00</div>
<div style="left:609px;top:389px;font-size:10px;line-height:10px;color:#d0d0d0;width:40px;text-align:center;letter-spacing:-0.3px;">50 €</div>
<div style="left:649px;top:389px;font-size:10px;line-height:10px;color:#1e1e1e;width:53px;text-align:center;letter-spacing:-0.3px;">100 €</div>
<div style="left:702px;top:389px;font-size:10px;line-height:10px;color:#d0d0d0;width:43px;text-align:center;letter-spacing:-0.3px;">1:00</div>
<div style="left:745px;top:389px;font-size:10px;line-height:10px;color:#d0d0d0;width:38.5px;text-align:center;letter-spacing:-0.3px;">0 €</div>
<div style="left:783.5px;top:389px;font-size:10px;line-height:10px;color:#1e1e1e;width:51.5px;text-align:center;letter-spacing:-0.3px;">0 €</div>
<div style="left:835px;top:389px;font-size:10px;line-height:10px;color:#d0d0d0;width:54px;text-align:center;letter-spacing:-0.3px;">Non facturé</div>
<div style="left:518px;top:417px;font-size:10px;line-height:10px;color:#1e1e1e;letter-spacing:-0.3px;">TOTAL</div>
<div style="left:564px;top:417px;font-size:10px;line-height:10px;color:#1e1e1e;width:45px;text-align:center;letter-spacing:-0.3px;">2:00</div>
<div style="left:649px;top:417px;font-size:10px;line-height:10px;color:#1e1e1e;width:53px;text-align:center;letter-spacing:-0.3px;">200 €</div>
<div style="left:702px;top:417px;font-size:10px;line-height:10px;color:#d0d0d0;width:43px;text-align:center;letter-spacing:-0.3px;">2:00</div>
<div style="left:783.5px;top:417px;font-size:10px;line-height:10px;color:#1e1e1e;width:51.5px;text-align:center;letter-spacing:-0.3px;">100 €</div>
<div style="left:457px;top:435px;font-size:10px;line-height:10px;color:#d0d0d0;letter-spacing:-0.3px;">TOTAL Non facturable</div>
<div style="left:564px;top:435px;font-size:10px;line-height:10px;color:#d0d0d0;width:45px;text-align:center;letter-spacing:-0.3px;">1:00</div>
<div style="left:649px;top:435px;font-size:10px;line-height:10px;color:#d0d0d0;width:53px;text-align:center;letter-spacing:-0.3px;">100 €</div>
<div style="left:702px;top:435px;font-size:10px;line-height:10px;color:#d0d0d0;width:43px;text-align:center;letter-spacing:-0.3px;">1:00</div>
<div style="left:783.5px;top:435px;font-size:10px;line-height:10px;color:#d0d0d0;width:51.5px;text-align:center;letter-spacing:-0.3px;">100 €</div>
<div style="left:8px;top:326.5px;font-size:11.25px;line-height:11.25px;color:#1e1e1e;text-decoration:underline;text-decoration-color:#4a4a4a;text-underline-offset:1.5px;text-decoration-skip-ink:none;">Présentation du corps de la facture</div>
<div style="left:194px;top:327px;font-size:11px;line-height:11px;color:#0a0a0a;font-weight:bold;letter-spacing:0.42px;-webkit-text-stroke:0.25px #0a0a0a;">Pas de détail</div>
<div style="left:453px;top:326.5px;font-size:11.2px;line-height:11.2px;color:#1e1e1e;text-decoration:underline;text-decoration-color:#4a4a4a;text-underline-offset:1.5px;text-decoration-skip-ink:none;">Présentation des annexes de la facture</div>
<div style="left:658px;top:327px;font-size:11px;line-height:11px;color:#0a0a0a;font-weight:bold;letter-spacing:0.5px;-webkit-text-stroke:0.25px #0a0a0a;">Diligences triées par date</div>
<div style="left:185px;top:452px;width:261px;height:20px;background:#fff;border:1px solid #e4e4e4;border-radius:3px;box-sizing:border-box;"></div>
<svg style="left:189px;top:454px" width="16" height="16" viewBox="0 0 16 16"><path d="M2.8 10.8 L10.8 2.8 L13.2 5.2 L5.2 13.2 Z" fill="#f4c533" stroke="#d29a18" stroke-width="0.6"/><path d="M10.8 2.8 L12.9 0.7 L15.3 3.1 L13.2 5.2 Z" fill="#d3342c"/><path d="M2.8 10.8 L5.2 13.2 L1.3 14.7 Z" fill="#e6c79c"/><path d="M1.3 14.7 L1.9 12.9 L3.1 14.1 Z" fill="#4a4a4a"/></svg>
<div style="left:211px;top:456px;font-size:11px;line-height:11px;color:#1e1e2e;">Modifier la présentation du corps de la facture</div>
<div style="left:7px;top:488px;width:158px;height:89px;background:#ffffff;border:1px solid #dadada;box-sizing:border-box;"></div>
<div style="left:7px;top:503px;width:158px;height:1px;background:#3c3c3c;"></div>
<div style="left:7px;top:504px;width:158px;height:1px;background:#8a8a8a;"></div>
<div style="left:7px;top:531px;width:158px;height:1px;background:#3c3c3c;"></div>
<div style="left:7px;top:532px;width:158px;height:1px;background:#8a8a8a;"></div>
<div style="left:7px;top:560px;width:158px;height:1px;background:#3c3c3c;"></div>
<div style="left:7px;top:561px;width:158px;height:1px;background:#8a8a8a;"></div>
<div style="left:44px;top:488px;width:1px;height:89px;background:#dadada;"></div>
<div style="left:111px;top:488px;width:1px;height:89px;background:#dadada;"></div>
<div style="left:7px;top:491.5px;font-size:10px;line-height:10px;color:#1e1e1e;width:37px;text-align:center;letter-spacing:-0.3px;">Date</div>
<div style="left:47px;top:491.5px;font-size:10px;line-height:10px;color:#1e1e1e;letter-spacing:-0.3px;">Frais</div>
<div style="left:111px;top:491.5px;font-size:10px;line-height:10px;color:#1e1e1e;width:54px;text-align:center;letter-spacing:-0.3px;">Montant</div>
<div style="left:7px;top:508.0px;font-size:10px;line-height:10px;color:#1e1e1e;width:37px;text-align:center;letter-spacing:0px;">01/01</div>
<div style="left:7px;top:519.5px;font-size:10px;line-height:10px;color:#d0d0d0;font-style:italic;width:37px;text-align:center;letter-spacing:-0.3px;">N°Id</div>
<div style="left:47px;top:508.0px;font-size:10px;line-height:10px;color:#1e1e1e;letter-spacing:-0.45px;">Description</div>
<div style="left:47px;top:519.5px;font-size:10px;line-height:10px;color:#1e1e1e;font-style:italic;letter-spacing:-0.65px;">Commentaires</div>
<div style="left:111px;top:508.0px;font-size:10px;line-height:10px;color:#1e1e1e;width:54px;text-align:center;letter-spacing:-0.3px;">100 €</div>
<div style="left:7px;top:536.5px;font-size:10px;line-height:10px;color:#1e1e1e;width:37px;text-align:center;letter-spacing:0px;">01/01</div>
<div style="left:7px;top:548.0px;font-size:10px;line-height:10px;color:#d0d0d0;font-style:italic;width:37px;text-align:center;letter-spacing:-0.3px;">N°Id</div>
<div style="left:47px;top:536.5px;font-size:10px;line-height:10px;color:#1e1e1e;letter-spacing:-0.45px;">Description</div>
<div style="left:47px;top:548.0px;font-size:10px;line-height:10px;color:#1e1e1e;font-style:italic;letter-spacing:-0.65px;">Commentaires</div>
<div style="left:111px;top:536.5px;font-size:10px;line-height:10px;color:#1e1e1e;width:54px;text-align:center;letter-spacing:-0.3px;">100 €</div>
<div style="left:47px;top:565px;font-size:10px;line-height:10px;color:#1e1e1e;letter-spacing:-0.3px;">TOTAL</div>
<div style="left:111px;top:565px;font-size:10px;line-height:10px;color:#1e1e1e;width:54px;text-align:center;letter-spacing:-0.3px;">200 €</div>
<div style="left:246px;top:488px;width:158px;height:89px;background:#ffffff;border:1px solid #dadada;box-sizing:border-box;"></div>
<div style="left:246px;top:503px;width:158px;height:1px;background:#3c3c3c;"></div>
<div style="left:246px;top:504px;width:158px;height:1px;background:#8a8a8a;"></div>
<div style="left:246px;top:531px;width:158px;height:1px;background:#3c3c3c;"></div>
<div style="left:246px;top:532px;width:158px;height:1px;background:#8a8a8a;"></div>
<div style="left:246px;top:560px;width:158px;height:1px;background:#3c3c3c;"></div>
<div style="left:246px;top:561px;width:158px;height:1px;background:#8a8a8a;"></div>
<div style="left:283px;top:488px;width:1px;height:89px;background:#dadada;"></div>
<div style="left:350px;top:488px;width:1px;height:89px;background:#dadada;"></div>
<div style="left:246px;top:491.5px;font-size:10px;line-height:10px;color:#1e1e1e;width:37px;text-align:center;letter-spacing:-0.3px;">Date</div>
<div style="left:286px;top:491.5px;font-size:10px;line-height:10px;color:#1e1e1e;letter-spacing:-0.3px;">Frais</div>
<div style="left:350px;top:491.5px;font-size:10px;line-height:10px;color:#1e1e1e;width:54px;text-align:center;letter-spacing:-0.3px;">Montant</div>
<div style="left:246px;top:508.0px;font-size:10px;line-height:10px;color:#1e1e1e;width:37px;text-align:center;letter-spacing:0px;">01/01</div>
<div style="left:246px;top:519.5px;font-size:10px;line-height:10px;color:#d0d0d0;font-style:italic;width:37px;text-align:center;letter-spacing:-0.3px;">N°Id</div>
<div style="left:286px;top:508.0px;font-size:10px;line-height:10px;color:#1e1e1e;letter-spacing:-0.45px;">Description</div>
<div style="left:286px;top:519.5px;font-size:10px;line-height:10px;color:#1e1e1e;font-style:italic;letter-spacing:-0.65px;">Commentaires</div>
<div style="left:350px;top:508.0px;font-size:10px;line-height:10px;color:#1e1e1e;width:54px;text-align:center;letter-spacing:-0.3px;">100 €</div>
<div style="left:246px;top:536.5px;font-size:10px;line-height:10px;color:#1e1e1e;width:37px;text-align:center;letter-spacing:0px;">01/01</div>
<div style="left:246px;top:548.0px;font-size:10px;line-height:10px;color:#d0d0d0;font-style:italic;width:37px;text-align:center;letter-spacing:-0.3px;">N°Id</div>
<div style="left:286px;top:536.5px;font-size:10px;line-height:10px;color:#1e1e1e;letter-spacing:-0.45px;">Description</div>
<div style="left:286px;top:548.0px;font-size:10px;line-height:10px;color:#1e1e1e;font-style:italic;letter-spacing:-0.65px;">Commentaires</div>
<div style="left:350px;top:536.5px;font-size:10px;line-height:10px;color:#1e1e1e;width:54px;text-align:center;letter-spacing:-0.3px;">100 €</div>
<div style="left:286px;top:565px;font-size:10px;line-height:10px;color:#1e1e1e;letter-spacing:-0.3px;">TOTAL</div>
<div style="left:350px;top:565px;font-size:10px;line-height:10px;color:#1e1e1e;width:54px;text-align:center;letter-spacing:-0.3px;">200 €</div>
<div style="left:12px;top:474px;font-size:11.3px;line-height:11.3px;color:#1e1e1e;">Détail des frais</div>
<div style="left:94px;top:474px;font-size:11px;line-height:11px;color:#0a0a0a;font-weight:bold;letter-spacing:0.5px;-webkit-text-stroke:0.25px #0a0a0a;">Annexes de la facture</div>
<div style="left:252.5px;top:474px;font-size:11.2px;line-height:11.2px;color:#1e1e1e;">Détail des débours</div>
<div style="left:361px;top:474px;font-size:11px;line-height:11px;color:#0a0a0a;font-weight:bold;letter-spacing:0.5px;-webkit-text-stroke:0.25px #0a0a0a;">Annexes de la facture</div>
<div style="left:171px;top:557px;width:68px;height:21px;background:#fff;border:1px solid #e4e4e4;border-radius:3px;box-sizing:border-box;"></div>
<svg style="left:175px;top:559px" width="16" height="16" viewBox="0 0 16 16"><path d="M2.8 10.8 L10.8 2.8 L13.2 5.2 L5.2 13.2 Z" fill="#f4c533" stroke="#d29a18" stroke-width="0.6"/><path d="M10.8 2.8 L12.9 0.7 L15.3 3.1 L13.2 5.2 Z" fill="#d3342c"/><path d="M2.8 10.8 L5.2 13.2 L1.3 14.7 Z" fill="#e6c79c"/><path d="M1.3 14.7 L1.9 12.9 L3.1 14.1 Z" fill="#4a4a4a"/></svg>
<div style="left:193px;top:562px;font-size:11px;line-height:11px;color:#1e1e2e;">Modifier</div>
<div style="left:410px;top:557px;width:68px;height:21px;background:#fff;border:1px solid #e4e4e4;border-radius:3px;box-sizing:border-box;"></div>
<svg style="left:414px;top:559px" width="16" height="16" viewBox="0 0 16 16"><path d="M2.8 10.8 L10.8 2.8 L13.2 5.2 L5.2 13.2 Z" fill="#f4c533" stroke="#d29a18" stroke-width="0.6"/><path d="M10.8 2.8 L12.9 0.7 L15.3 3.1 L13.2 5.2 Z" fill="#d3342c"/><path d="M2.8 10.8 L5.2 13.2 L1.3 14.7 Z" fill="#e6c79c"/><path d="M1.3 14.7 L1.9 12.9 L3.1 14.1 Z" fill="#4a4a4a"/></svg>
<div style="left:432px;top:562px;font-size:11px;line-height:11px;color:#1e1e2e;">Modifier</div>
<div style="left:539px;top:482px;width:9px;height:9px;border:1.5px solid #8e8e8e;border-radius:2.5px;background:#f7f7f7;"></div>
<div style="left:554.5px;top:484.5px;font-size:11.2px;line-height:11.2px;color:#1e1e1e;">Tableau récapitulatif</div>
<div style="left:669px;top:480px;width:222px;height:20px;background:#e3e3e3;border-radius:3px;"></div>
<svg style="left:673px;top:482px" width="16" height="16" viewBox="0 0 16 16"><path d="M2 14 L3 10.5 L11.5 2 L14 4.5 L5.5 13 Z" fill="#e0e0e0" stroke="#9a9a9a" stroke-width="0.8"/><path d="M2 14 L2.6 11.8 L4.2 13.4 Z" fill="#777"/></svg>
<div style="left:698.5px;top:484.5px;font-size:11px;line-height:11px;color:#8a8a8a;">Présentation du tableau récapitulatif</div>
<div style="left:615px;top:453px;width:276px;height:20px;background:#fff;border:1px solid #e4e4e4;border-radius:3px;box-sizing:border-box;"></div>
<svg style="left:619px;top:455px" width="16" height="16" viewBox="0 0 16 16"><path d="M2.8 10.8 L10.8 2.8 L13.2 5.2 L5.2 13.2 Z" fill="#f4c533" stroke="#d29a18" stroke-width="0.6"/><path d="M10.8 2.8 L12.9 0.7 L15.3 3.1 L13.2 5.2 Z" fill="#d3342c"/><path d="M2.8 10.8 L5.2 13.2 L1.3 14.7 Z" fill="#e6c79c"/><path d="M1.3 14.7 L1.9 12.9 L3.1 14.1 Z" fill="#4a4a4a"/></svg>
<div style="left:640px;top:457px;font-size:11px;line-height:11px;color:#1e1e2e;">Modifier la présentation des annexes de la facture</div>
<div style="left:793px;top:592px;width:99px;height:30px;background:#fff;border:1px solid #e4e4e4;border-radius:3px;box-sizing:border-box;"></div>
<div style="left:826px;top:597px;font-size:11px;line-height:11px;color:#1e1e2e;">Fermer</div>
<svg style="left:0;top:0" width="901" height="612" viewBox="0 0 901 612"><rect x="135.5" y="295.5" width="408" height="26.5" fill="none" stroke="#ff4f00" stroke-width="3"/><rect x="446.5" y="324.5" width="443.5" height="124.5" fill="none" stroke="#ff4f00" stroke-width="3"/><ellipse cx="747.5" cy="459.5" rx="150.5" ry="28" fill="none" stroke="#ff4f00" stroke-width="2.8"/><path d="M557 436 L604 459" stroke="#ff4f00" stroke-width="2.4"/><path d="M615.5 464.5 L605.5 452.5 L600 464 Z" fill="#ff4f00"/></svg>
</body></html>
